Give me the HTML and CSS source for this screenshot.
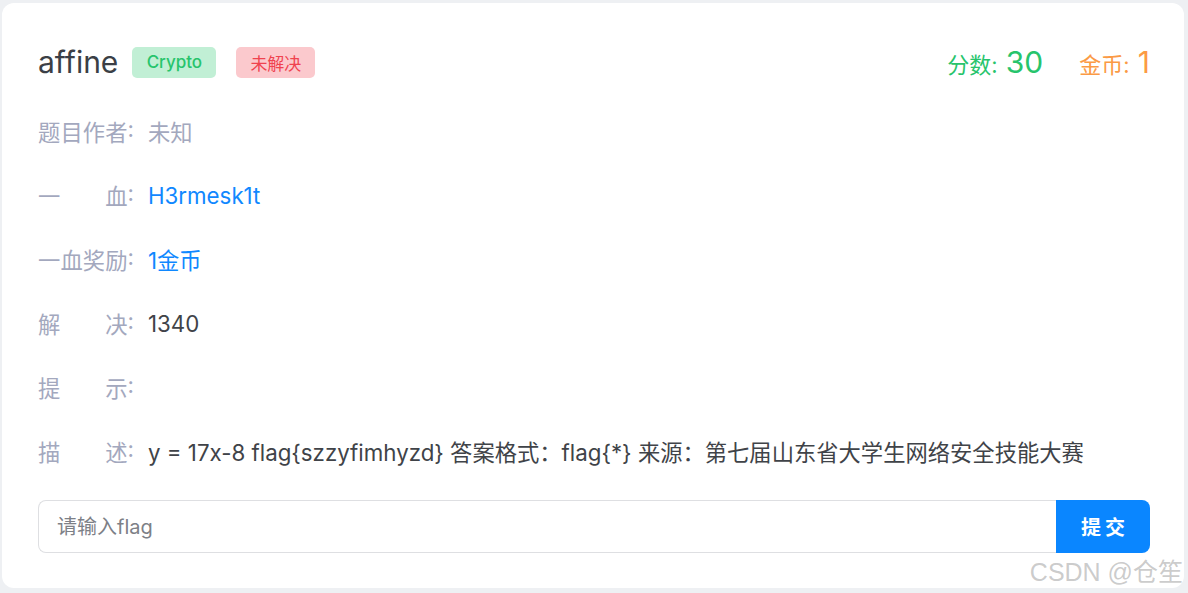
FILE: index.html
```html
<!DOCTYPE html>
<html lang="zh">
<head>
    <meta charset="UTF-8">
    <title>affine</title>
    <link rel="stylesheet" href="styles.css">
</head>
<body>
    <div class="card">
        <div class="card-header">
            <div class="title-group">
                <h1 class="title">affine</h1>
                <span class="tag tag-type">Crypto</span>
                <span class="tag tag-status">未解决</span>
            </div>
            <div class="stats">
                <span class="stat stat-score">分数: <b>30</b></span>
                <span class="stat stat-coin">金币: <b>1</b></span>
            </div>
        </div>

        <div class="info-row">
            <span class="label"><span class="label-text">题目作者</span>:</span>
            <span class="value muted">未知</span>
        </div>
        <div class="info-row">
            <span class="label"><span class="label-text">一血</span>:</span>
            <span class="value link">H3rmesk1t</span>
        </div>
        <div class="info-row">
            <span class="label"><span class="label-text">一血奖励</span>:</span>
            <span class="value link">1金币</span>
        </div>
        <div class="info-row">
            <span class="label"><span class="label-text">解决</span>:</span>
            <span class="value">1340</span>
        </div>
        <div class="info-row">
            <span class="label"><span class="label-text">提示</span>:</span>
            <span class="value"></span>
        </div>
        <div class="info-row">
            <span class="label"><span class="label-text">描述</span>:</span>
            <span class="value">y = 17x-8 flag{szzyfimhyzd} 答案格式：flag{*} 来源：第七届山东省大学生网络安全技能大赛</span>
        </div>

        <form class="flag-form" onsubmit="return false">
            <input class="flag-input" type="text" placeholder="请输入flag">
            <button class="flag-btn" type="submit">提交</button>
        </form>
    </div>

    <div class="watermark">CSDN @仓笙</div>
</body>
</html>
```

FILE: styles.css
```css
:root {
    --bg-color: #eef0f3;
    --text-color: #404348;
    --label-color: #a3a8be;
    --blue: #1088ff;
    --green: #27c46c;
    --orange: #fb9a45;
}

* {
    margin: 0;
    padding: 0;
    box-sizing: border-box;
}

body {
    font-family: 'Inter', 'Noto Sans CJK SC', sans-serif;
    background-color: var(--bg-color);
    color: var(--text-color);
    padding: 3px 4px 5px 2px;
    height: 593px;
    overflow: hidden;
}

.card {
    background: #fff;
    border-radius: 12px;
    height: 585px;
    padding: 37px 34px 0 36px;
}

.card-header {
    display: flex;
    justify-content: space-between;
    align-items: center;
    height: 44px;
    margin-bottom: 15px;
}

.title-group {
    display: flex;
    align-items: center;
}

.title {
    font-size: 30px;
    font-weight: 400;
    color: #3b3f46;
    margin-right: 14px;
}

.tag {
    display: inline-flex;
    align-items: center;
    justify-content: center;
    height: 31px;
    border-radius: 5px;
    font-size: 17px;
}

.tag-type {
    width: 84px;
    background: #c1efd5;
    color: var(--green);
    font-weight: 500;
}

.tag-status {
    width: 79px;
    margin-left: 20px;
    background: #fbc9cd;
    color: #f0434f;
}

.stats {
    display: flex;
    align-items: baseline;
    gap: 36px;
}

.stat {
    font-size: 22px;
}

.stat b {
    font-size: 30px;
    font-weight: 400;
    margin-left: 2px;
}

.stat-score {
    color: var(--green);
}

.stat-coin {
    color: var(--orange);
}

.info-row {
    display: flex;
    align-items: center;
    height: 64px;
    font-size: 22.3px;
}

.label {
    display: flex;
    width: 96px;
    flex-shrink: 0;
    color: var(--label-color);
    margin-right: 14px;
    white-space: nowrap;
}

.label-text {
    width: 91px;
    text-align: justify;
    text-align-last: justify;
}

.value.muted {
    color: var(--label-color);
}

.value.link {
    color: var(--blue);
}

.flag-form {
    display: flex;
    margin-top: 17px;
    height: 53px;
}

.flag-input {
    flex: 1;
    border: 1px solid #dedfe2;
    border-right: none;
    border-radius: 8px 0 0 8px;
    padding: 0 18px;
    font-family: inherit;
    font-size: 20px;
    color: var(--text-color);
    outline: none;
}

.flag-input::placeholder {
    color: #7d8087;
}

.flag-btn {
    width: 94px;
    border: none;
    border-radius: 0 8px 8px 0;
    background: #0a86ff;
    color: #fff;
    font-family: inherit;
    font-size: 20px;
    font-weight: 700;
    letter-spacing: 4px;
    text-indent: 4px;
    cursor: pointer;
}

.watermark {
    position: absolute;
    right: 5px;
    bottom: 5px;
    font-family: 'Liberation Sans', 'Noto Sans CJK SC', sans-serif;
    font-size: 25px;
    color: rgba(160, 160, 160, 0.55);
}
```
